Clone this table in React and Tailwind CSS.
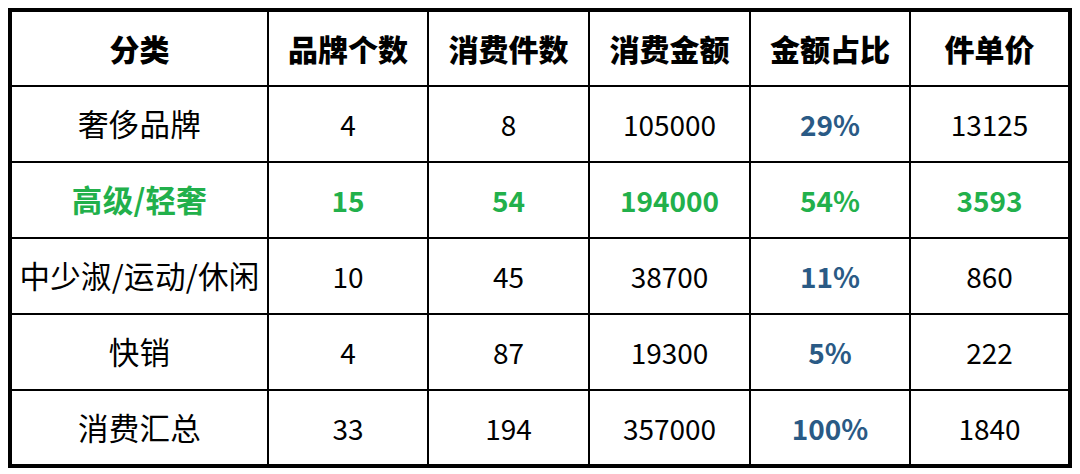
const head = ["分类", "品牌个数", "消费件数", "消费金额", "金额占比", "件单价"];

const rows = [
  { cells: ["奢侈品牌", "4", "8", "105000", "29%", "13125"] },
  { cells: ["高级/轻奢", "15", "54", "194000", "54%", "3593"], hot: true },
  { cells: ["中少淑/运动/休闲", "10", "45", "38700", "11%", "860"] },
  { cells: ["快销", "4", "87", "19300", "5%", "222"] },
  { cells: ["消费汇总", "33", "194", "357000", "100%", "1840"] },
];

const widths = ["w-[258px]", "w-[160px]", "w-[161px]", "w-[161px]", "w-[160px]", "w-[160px]"];

export default function App() {
  return (
    <div
      className="w-[1080px] h-[474px] bg-white pt-[8px] pl-[8px]"
      style={{ fontFamily: '"Noto Sans CJK SC", "Noto Sans", sans-serif' }}
    >
      <table className="border-collapse border-4 border-black text-[28px] text-black">
        <thead>
          <tr className="h-[76px]">
            {head.map((h, i) => (
              <th key={h} className={`${widths[i]} border-2 border-black font-black text-[30px] text-center p-0`}>
                {h}
              </th>
            ))}
          </tr>
        </thead>
        <tbody>
          {rows.map((r) => (
            <tr key={r.cells[0]} className="h-[76px]">
              {r.cells.map((c, i) => {
                let color = "";
                if (r.hot) color = "text-[#22b04b] font-bold";
                else if (i === 4) color = "text-[#2a5a85] font-bold";
                const size = i === 0 ? "text-[30.5px] tracking-[0.3px]" : "";
                return (
                  <td key={i} className={`border-2 border-black text-center p-0 whitespace-nowrap ${size} ${color}`}>
                    {c}
                  </td>
                );
              })}
            </tr>
          ))}
        </tbody>
      </table>
    </div>
  );
}
